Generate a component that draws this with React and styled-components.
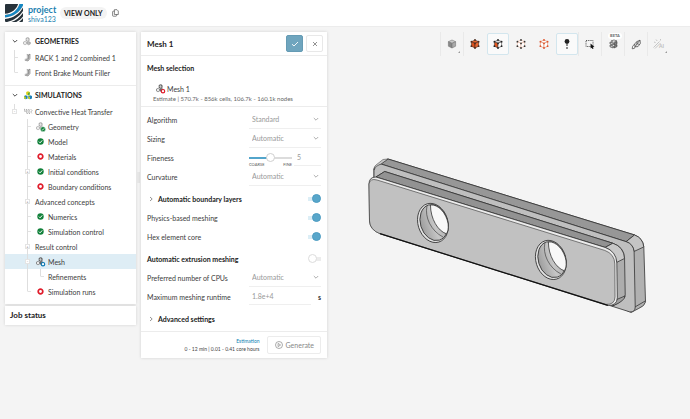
import styled, { createGlobalStyle, css } from 'styled-components';

const GlobalStyle = createGlobalStyle`
    *, *::before { box-sizing: border-box; }
    body {
        margin: 0;
        background: #f4f4f4;
        color: #3c3c3c;
        font-family: Lato, "Liberation Sans", sans-serif;
        font-size: 7px;
        line-height: 10px;
    }
    button, input, select { font: inherit; color: inherit; margin: 0; padding: 0; }
    h1, h2, h3, p, ul { margin: 0; padding: 0; font-size: inherit; }
    svg { display: block; }
`;

const Page = styled.div`
    display: flex;
    flex-direction: column;
    min-height: 100vh;
`;

const Header = styled.header`
    display: flex;
    align-items: center;
    height: 27px;
    padding: 0 5px;
    background: white;
    border-bottom: 1px solid #ececec;
`;

const Titles = styled.div`
    margin-left: 5px;
    padding-top: 2px;
    width: 32px;
`;

const ProjectLink = styled.a`
    display: block;
    color: #1d7fb0;
    text-decoration: none;
    font-size: ${(p) => (p.$main ? '9px' : '7px')};
    font-weight: ${(p) => (p.$main ? 700 : 400)};
    line-height: ${(p) => (p.$main ? '10px' : '8px')};
`;

const Pill = styled.span`
    padding: 1px 4px;
    margin-right: 5px;
    border-radius: 6px;
    background: #f3f3f3;
    color: #222;
    font-weight: 700;
    white-space: nowrap;
`;

const IconButton = styled.button`
    display: grid;
    place-items: center;
    border: 0;
    background: none;
`;

const Main = styled.main`
    display: flex;
    flex: 1;
    align-items: flex-start;
    padding: 5px 0 0 5px;
`;

const Sidebar = styled.aside`
    flex: none;
    width: 131px;
`;

const Card = styled.section`
    background: white;
    box-shadow: 0 0 3px rgba(0, 0, 0, 0.14);
`;

const TreeList = styled.ul`
    list-style: none;
    padding-bottom: 5px;
    & + & { border-top: 1px solid #ececec; }
`;

const TreeRow = styled.li`
    display: flex;
    align-items: center;
    height: ${(p) => (p.$root ? '18px' : '15px')};
    padding-left: 3px;
    white-space: nowrap;
    background: ${(p) => (p.$selected ? '#deedf5' : 'transparent')};
    ${(p) => p.$root && css`
        color: #222;
        font-weight: 700;
    `}
`;

const Cell = styled.span`
    display: grid;
    place-items: center;
    flex: none;
    width: 13px;
    height: 100%;
    background: ${(p) => (p.$line ? 'linear-gradient(#dedede, #dedede) 6px 0 / 1px ' + (p.$line === 'end' ? '50%' : '100%') + ' no-repeat' : 'none')};
`;

const Tick = styled.span`
    width: 3px;
    height: 1px;
    margin-left: 4px;
    background: #e2e2e2;
`;

const Expander = styled.button`
    display: grid;
    place-items: center;
    width: 5px;
    height: 5px;
    border: 1px solid #e4e4e4;
    background: white;
    color: #777;
    font-size: 4px;
    line-height: 3px;
`;

const RowText = styled.span`
    margin-left: 1px;
`;

const JobStatus = styled(Card)`
    margin-top: 2px;
    padding: 4px 5px;
    font-size: 8px;
    font-weight: 700;
    line-height: 11px;
    color: #222;
`;

const Handle = styled.span`
    flex: none;
    align-self: flex-start;
    width: 3px;
    height: 11px;
    margin: 140px 1px 0;
    background: #e6e6e6;
`;

const Panel = styled(Card).attrs({ as: 'form' })`
    flex: none;
    width: 186px;
`;

const PanelHeader = styled.div`
    display: flex;
    align-items: center;
    gap: 3px;
    height: 24px;
    padding: 0 4px 0 6px;
    border-bottom: 1px solid #ececec;
`;

const PanelTitle = styled.h1`
    flex: 1;
    font-size: 8px;
    color: #222;
`;

const SquareButton = styled(IconButton).attrs({ type: 'button' })`
    width: 17px;
    height: 17px;
    border: 1px solid ${(p) => (p.$primary ? '#659bb4' : '#e8e8e8')};
    border-radius: 2px;
    color: ${(p) => (p.$primary ? 'white' : '#777')};
    background: ${(p) => (p.$primary ? '#6fa5be' : 'white')};
`;

const Selection = styled.div`
    height: 51px;
    padding: 7px 6px 0;
    border-bottom: 1px solid #ececec;
`;

const SelectionTitle = styled.h2`
    color: #222;
`;

const MeshName = styled.div`
    display: flex;
    align-items: center;
    gap: 1px;
    margin-top: 10px;
    padding-left: 8px;
`;

const Estimate = styled.p`
    padding-left: 6px;
    font-size: 6px;
    color: #666;
    white-space: nowrap;
`;

const Fields = styled.div`
    display: grid;
    gap: 3px;
    padding: 3px 6px;
`;

const Field = styled.div`
    display: flex;
    align-items: center;
    height: 19px;
`;

const Label = styled.label`
    flex: 1;
    white-space: nowrap;
    ${(p) => p.$strong && css`
        color: #222;
        font-weight: 700;
    `}
`;

const Twisty = styled(IconButton).attrs({ type: 'button' })`
    width: 8px;
    margin-right: 3px;
    color: #777;
`;

const Control = styled.div`
    display: flex;
    align-items: center;
    flex: none;
    width: 72px;
    height: 19px;
    color: #999;
    ${(p) => p.$underlined && css`
        padding-right: 2px;
        border-bottom: 1px solid #efefef;
    `}
`;

const Select = styled.select`
    appearance: none;
    flex: 1;
    padding-left: 3px;
    border: 0;
    background: none;
    outline: none;
`;

const TextInput = styled.input`
    width: ${(p) => p.$width};
    height: 17px;
    border: 0;
    border-bottom: 1px solid #efefef;
    padding-left: 3px;
    background: none;
`;

const Unit = styled.span`
    flex: 1;
    text-align: right;
    color: #333;
    font-weight: 700;
`;

const SliderBox = styled.div`
    width: 43px;
    margin-right: 2px;
    padding-top: 5px;
`;

const Slider = styled.input`
    display: block;
    appearance: none;
    width: 43px;
    height: 9px;
    background: linear-gradient(to right, #53a5cb 50%, #dcdcdc 50%) 0 4px / 100% 2px no-repeat;
    &::-webkit-slider-thumb {
        appearance: none;
        box-sizing: border-box;
        width: 9px;
        height: 9px;
        border: 1px solid #d0d0d0;
        border-radius: 50%;
        background: white;
    }
`;

const SliderEnds = styled.div`
    display: flex;
    justify-content: space-between;
    font-size: 4px;
    line-height: 5px;
    color: #555;
`;

const Toggle = styled.input.attrs({ type: 'checkbox' })`
    appearance: none;
    display: flex;
    align-items: center;
    width: 13px;
    height: 9px;
    background: linear-gradient(#ececec, #ececec) 3px 3px / 10px 4px no-repeat;
    &::before {
        content: "";
        width: 9px;
        height: 9px;
        border: 1px solid #dcdcdc;
        border-radius: 50%;
        background: white;
    }
    &:checked {
        justify-content: flex-end;
        background: linear-gradient(#dceef6, #dceef6) 0 3px / 10px 4px no-repeat;
    }
    &:checked::before {
        border-color: #4c9cc2;
        background: #58a6ca;
    }
`;

const Footer = styled.div`
    display: flex;
    align-items: center;
    justify-content: flex-end;
    gap: 7px;
    height: 27px;
    padding: 0 6px;
    border-top: 1px solid #ececec;
`;

const Estimation = styled.div`
    font-size: 5px;
    line-height: 8px;
    text-align: right;
    color: #444;
    a {
        color: #0d7fb3;
        text-decoration: none;
    }
`;

const GenerateButton = styled.button.attrs({ type: 'button' })`
    display: flex;
    align-items: center;
    gap: 3px;
    height: 18px;
    padding: 0 6px 0 7px;
    border: 1px solid #ececec;
    border-radius: 2px;
    background: white;
    color: #888;
`;

const Viewport = styled.section`
    flex: 1;
    min-width: 0;
    padding-right: 20px;
`;

const Toolbar = styled.div`
    display: flex;
    justify-content: flex-end;
`;

const ToolCell = styled.div`
    position: relative;
    display: grid;
    place-items: center;
    width: 23px;
    height: 24px;
    border-left: 1px solid ${(p) => (p.$divider ? '#e9e9e9' : 'transparent')};
`;

const ToolButton = styled(IconButton)`
    width: 22px;
    height: 22px;
    border: 1px solid ${(p) => (p.$active ? '#d3e6ee' : 'transparent')};
    border-radius: 2px;
    background: ${(p) => (p.$active ? '#fafafa' : 'none')};
`;

const Beta = styled.span`
    position: absolute;
    top: 1px;
    left: 6px;
    padding: 0 2px;
    border-radius: 3px;
    background: white;
    font-size: 4px;
    font-weight: 700;
    line-height: 6px;
    color: #666;
`;

const MoreMark = styled.span`
    position: absolute;
    right: 3px;
    bottom: 3px;
    border: 1px solid transparent;
    border-right-color: #999;
    border-bottom-color: #999;
`;

const Model = styled.svg`
    width: 81%;
    margin: 102px 0 0 12%;
    overflow: visible;
`;

const Chevron = ({ right }) => (
    <svg width="6" height="6" viewBox="0 0 6 6" fill="none" stroke="currentColor" strokeWidth="0.8">
        <path d={right ? 'M2 1 L4.2 3 L2 5' : 'M0.8 2 L3 4.2 L5.2 2'} />
    </svg>
);

const Logo = () => (
    <svg width="18" height="18" viewBox="0 0 17 17">
        <rect width="17" height="17" rx="1" fill="#27323a" />
        <path d="M0 10.2 C7 9.5 11.5 6 13.6 0 H17 V1.6 C13.5 8 8 12 0 13Z" fill="#1687c2" />
        <path d="M0 9.3 C6.5 8.7 10.8 5 12.4 0 H13.6 C11.8 6 7 9.8 0 10.4Z M0 12.8 C8 12 13.5 8 17 1.4 V3.4 C13.5 9.6 8 13.4 0 14.2Z M2 17 C8 15.6 13.5 12 17 6.6 V8.4 C14 12.6 10 15.6 6 17Z M10.6 17 C13.5 15.6 15.5 13.8 17 11.8 V13.2 C15.8 14.8 14.4 16.2 13.2 17Z" fill="white" />
    </svg>
);

const CopyIcon = () => (
    <svg width="7" height="8" viewBox="0 0 7 8" fill="white" stroke="#555" strokeWidth="0.7">
        <rect x="0.6" y="2.2" width="4" height="5" rx="0.6" />
        <path d="M2.4 0.7 H5 L6.3 2 V5.5 H2.4Z" />
    </svg>
);

const Badge = ({ kind }) => {
    if (kind === 'ok') return (
        <g>
            <circle cx="8" cy="8.2" r="2.5" fill="#12813b" stroke="white" strokeWidth="0.4" />
            <path d="M6.8 8.3 L7.7 9.1 L9.2 7.3" stroke="white" strokeWidth="0.7" fill="none" />
        </g>
    );
    return <circle cx="8" cy="8.2" r="1.7" fill="white" stroke={kind === 'error' ? '#e01c2b' : '#0d7ab5'} strokeWidth="1.2" />;
};

const PartsIcon = ({ badge, dark }) => (
    <svg width="11" height="11" viewBox="0 0 11 11">
        <g fill={dark ? '#777' : '#bbb'} stroke={dark ? '#333' : '#888'} strokeWidth="0.5">
            <path d="M4 2.2 L6 1.6 L7.2 2.4 V4.6 L5.4 5.4 L4 4.6Z" />
            <path d="M1.5 6 L3.2 5.2 L4.6 6 V8 L3 8.8 L1.5 8Z" fill="#ddd" />
            <path d="M5.2 6.2 L6.6 5.6 L8.3 6.3 V8 L6.6 8.8 L5.2 8Z" />
        </g>
        <path d="M4 3.2 L7 4 M5.5 2 V5 M1.5 7 L4.5 7.3 M3 5.4 V8.6" stroke="white" strokeWidth="0.4" />
        {badge && <Badge kind={badge} />}
    </svg>
);

const PartIcon = () => (
    <svg width="9" height="9" viewBox="0 0 9 9">
        <path d="M3.8 1.5 L7 1 V5.5 L5 8 L1.8 7.3 V5.7 L3.8 5.5Z" fill="#c4c4c4" />
        <path d="M3.8 1.5 L5.5 2.2 V5.8 L3.2 6.4 M5.5 2.2 L7 1 V5.5 L5 8 L1.8 7.2" fill="none" stroke="#777" strokeWidth="0.6" />
    </svg>
);

const SimulationIcon = () => (
    <svg width="10" height="9" viewBox="0 0 10 9">
        <path d="M3.2 1 L5 0.3 L6.8 1 V3.5 L5 4.4 L3.2 3.5Z" fill="#d9cf19" />
        <path d="M1 5 L2.8 4.2 L4.6 5 V7.4 L2.8 8.3 L1 7.4Z" fill="#1c80b8" />
        <path d="M5.2 5 L7 4.2 L9 5 V7.4 L7 8.3 L5.2 7.4Z" fill="#1c80b8" />
        <path d="M5 2 V4.4 L6.8 3.5 V1.2Z" fill="#55a83a" />
        <path d="M2.8 6 V8.3 L1 7.4 V5Z M7 6 V8.3 L5.2 7.4 V5Z" fill="#c4cf23" />
    </svg>
);

const HeatIcon = () => (
    <svg width="10" height="9" viewBox="0 0 10 9" fill="none" stroke="#888" strokeWidth="0.8">
        <path d="M1 2 C2.8 2.4 0.8 4.2 2.6 5 M3.2 2 C5 3 2.8 4.8 4.4 7 M5.6 2 C7 3.4 5 5 6.6 7" />
        <path d="M7.5 2 L9 3.5 L7.8 5 L9 6.7" strokeDasharray="1 0.5" />
    </svg>
);

const StatusIcon = ({ ok }) => (
    <svg width="7" height="7" viewBox="0 0 7 7" fill="none">
        {ok ? <circle cx="3.5" cy="3.5" r="3.2" fill="#12813b" /> : <circle cx="3.5" cy="3.5" r="2.3" stroke="#e01c2b" strokeWidth="1.7" />}
        {ok && <path d="M1.9 3.6 L3.1 4.8 L5.2 2.4" stroke="white" strokeWidth="1" />}
    </svg>
);

const icons = {
    parts: <PartsIcon />,
    part: <PartIcon />,
    sim: <SimulationIcon />,
    heat: <HeatIcon />,
    geometry: <PartsIcon badge="ok" />,
    mesh: <PartsIcon dark badge="info" />,
    ok: <StatusIcon ok />,
    todo: <StatusIcon />,
};

// cells: ' ' blank, '|' guide, 'L' last guide, '+' and '-' expanders, 'e' expander closing its guide, 'i' plain guide
const geometries = [
    { cells: '|', icon: 'part', text: 'RACK 1 and 2 combined 1' },
    { cells: 'L', icon: 'part', text: 'Front Brake Mount Filler' },
];

const simulations = [
    { cells: 'e', icon: 'heat', text: 'Convective Heat Transfer' },
    { cells: ' |', icon: 'geometry', text: 'Geometry' },
    { cells: ' |', icon: 'ok', text: 'Model' },
    { cells: ' |', icon: 'todo', text: 'Materials' },
    { cells: ' +', icon: 'ok', text: 'Initial conditions' },
    { cells: ' |', icon: 'todo', text: 'Boundary conditions' },
    { cells: ' +', text: 'Advanced concepts' },
    { cells: ' |', icon: 'ok', text: 'Numerics' },
    { cells: ' |', icon: 'ok', text: 'Simulation control' },
    { cells: ' +', text: 'Result control' },
    { cells: ' -', icon: 'mesh', text: 'Mesh', selected: true },
    { cells: ' iL', text: 'Refinements' },
    { cells: ' L', icon: 'todo', text: 'Simulation runs' },
];

function Guide({ type }) {
    if (type === ' ') return <Cell />;
    if (type === 'i') return <Cell $line="full" />;
    if (type === '|' || type === 'L') return <Cell $line={type === 'L' ? 'end' : 'full'}><Tick /></Cell>;
    return (
        <Cell $line={type === 'e' ? 'end' : 'full'}>
            <Expander aria-label="Toggle">{type === '+' ? '+' : '-'}</Expander>
        </Cell>
    );
}

function Tree({ title, icon, rows }) {
    return (
        <TreeList>
            <TreeRow $root>
                <Cell><Chevron /></Cell>
                <Cell>{icons[icon]}</Cell>
                <RowText>{title}</RowText>
            </TreeRow>
            {rows.map((row) => (
                <TreeRow key={row.text} $selected={row.selected}>
                    {row.cells.split('').map((c, i) => <Guide key={i} type={c} />)}
                    {row.icon && <Cell>{icons[row.icon]}</Cell>}
                    <RowText>{row.text}</RowText>
                </TreeRow>
            ))}
        </TreeList>
    );
}

function SelectField({ id, label, value }) {
    return (
        <Field>
            <Label htmlFor={id}>{label}</Label>
            <Control $underlined>
                <Select id={id} defaultValue={value}><option>{value}</option></Select>
                <Chevron />
            </Control>
        </Field>
    );
}

function ToggleField({ id, label, strong, expandable, on }) {
    return (
        <Field>
            {expandable && <Twisty aria-label="Expand"><Chevron right /></Twisty>}
            <Label htmlFor={id} $strong={strong}>{label}</Label>
            <Toggle id={id} defaultChecked={on} />
        </Field>
    );
}

const Cube = ({ top, left, right, stroke, dots }) => (
    <svg width="10" height="10" viewBox="0 0 10 10">
        <g stroke={stroke} strokeWidth="0.6" strokeLinejoin="round">
            <path d="M5 1 L8.6 2.7 L5 4.4 L1.4 2.7Z" fill={top} />
            <path d="M1.4 2.7 L5 4.4 V9 L1.4 7.2Z" fill={left} />
            <path d="M8.6 2.7 L5 4.4 V9 L8.6 7.2Z" fill={right} />
        </g>
        {dots && (
            <g fill={dots}>
                {[[5, 1], [8.6, 2.7], [5, 4.4], [1.4, 2.7], [1.4, 7.2], [5, 9], [8.6, 7.2]].map(([x, y]) => (
                    <circle key={x + '-' + y} cx={x} cy={y} r="0.9" />
                ))}
            </g>
        )}
    </svg>
);

const PinIcon = () => (
    <svg width="8" height="12" viewBox="0 0 8 12">
        <circle cx="4" cy="3.4" r="2.4" fill="#222" />
        <path d="M4 5 V8 M4 9 V11" stroke="#222" strokeWidth="1" />
    </svg>
);

const BoxSelectIcon = () => (
    <svg width="10" height="10" viewBox="0 0 10 10" fill="none">
        <rect x="1" y="1.5" width="7" height="6" stroke="#444" strokeWidth="0.9" strokeDasharray="1.2 1" />
        <path d="M5.5 4.5 L9.5 8 L7.8 8.2 L8.5 9.8 L7.5 10 L6.8 8.7 L5.7 9.4Z" fill="#111" />
    </svg>
);

const SectionIcon = () => (
    <svg width="9" height="10" viewBox="0 0 9 10" fill="#ccc" stroke="#333" strokeWidth="0.6">
        <path d="M1 3 L4.2 4 V6 L1 5Z M1 6 L4.2 7 V9 L1 7.8Z" />
        <path d="M5 4 L8 2.6 V4.8 L5 6Z M5 7 L8 5.6 V7.6 L5 9Z" fill="#888" />
        <path d="M2 2 L5 1 L8 2 L4.6 3.2Z" fill="white" />
    </svg>
);

const MeasureIcon = () => (
    <svg width="11" height="11" viewBox="0 0 11 11" fill="none" stroke="#444" strokeWidth="0.7">
        <path d="M4 7.8 L3.6 5 L5.8 2.6 L9 1.2 L9.4 4.4 L7 7.6 Z" fill="#e8e8e8" />
        <path d="M3.6 5 L1.6 7.4 L1.2 9.8 L3.4 9.4 L4 7.8 M4 7.8 L6 4.8 L9 1.2 M5.8 2.6 L6 4.8 L8.6 5.4" />
    </svg>
);

const AiIcon = () => (
    <svg width="14" height="12" viewBox="0 0 14 12">
        <path d="M1.5 9.5 L7.5 3.5 M3 10.5 L8.5 5 M4 1.5 L5.2 3 M2 4 L3.6 4.6 M8.5 1 V2.5" stroke="#c0c0c0" strokeWidth="0.9" />
        <text x="7" y="10" fontSize="5" fontWeight="700" fill="#bbb">AI</text>
    </svg>
);

const tools = [
    { name: 'Shaded', divider: true, icon: <Cube top="#ccc" left="#888" right="#aaa" stroke="#777" />, more: true },
    { name: 'Select volumes', divider: true, icon: <Cube top="#e8642e" left="#d9501c" right="#e8642e" stroke="#4a2a1e" dots="#4a2a1e" /> },
    { name: 'Select faces', active: true, icon: <Cube top="#ddd" left="#e0561f" right="#fff" stroke="#444" dots="#222" /> },
    { name: 'Select nodes', icon: <Cube top="#fff" left="#fff" right="#fff" stroke="#e9b49c" dots="#333" /> },
    { name: 'Select edges', icon: <Cube top="#fff" left="#fff" right="#fff" stroke="#d98868" dots="#e2532a" /> },
    { name: 'Probe', active: true, icon: <PinIcon /> },
    { name: 'Box selection', divider: true, icon: <BoxSelectIcon /> },
    { name: 'Mesh clip', divider: true, icon: <SectionIcon />, beta: true },
    { name: 'Measure', divider: true, icon: <MeasureIcon /> },
    { name: 'Assistant', divider: true, icon: <AiIcon />, more: true },
];

const Hole = () => (
    <g fill="none" stroke="#333" strokeWidth="0.8">
        <ellipse cx="435" cy="223" rx="15" ry="20" transform="rotate(-17 435 223)" fill="#e2e2e2" />
        <ellipse cx="436" cy="222.6" rx="13.6" ry="18.4" transform="rotate(-17 436 222.6)" fill="url(#bore)" />
        <path d="M432.5 205 C440 204 448.5 213 450.2 224 C450.6 229 450 232 448.3 233.8 C440 231 432.5 219 432.5 205Z" fill="#f8f8f8" />
        <path d="M429 206 C426.5 217 433 231 445 237" strokeWidth="0.6" />
    </g>
);

// view box keeps the coordinates of the scene
const Bracket = () => (
    <Model viewBox="370 158 278 156" role="img" aria-label="Bracket geometry">
        <defs>
            <linearGradient id="bore" x1="0" x2="1">
                <stop offset="0" stopColor="#9d9d9d" />
                <stop offset="0.5" stopColor="#c6c6c6" />
                <stop offset="1" stopColor="#a8a8a8" />
            </linearGradient>
        </defs>
        <g stroke="#333" strokeWidth="0.8" strokeLinejoin="round">
            <path d="M383 164 L390 159 L636.7 235 Q645 238 646 247 L647.7 302 Q647 306 641 308.5 L633.3 312.5 L376 200 V170 Q376 165 383 164Z" fill="#b1b1b1" />
            <path d="M383 164 L390 159 L636.7 235 L628.3 241.7Z" fill="#979797" />
            <path d="M628.3 241.7 L636.7 235 Q645 238 646 247 L636.3 251.5 Q635 244 628.3 241.7Z" fill="#c4c4c4" />
            <path d="M383 164 L628.3 241.7 Q635.6 244 636.3 252 L637.4 307 Q637.3 312.5 632 312 L610 305 L376 190 V170 Q376 165 383 164Z" fill="#bfbfbf" />
            <path d="M376 170 Q377 166 383 164 L390 159 L385 159.5 L378 165 Q375.8 167 376 170Z" fill="#c8c8c8" strokeWidth="0.5" />
            <path d="M637.3 307 L647.6 301" fill="none" />
            <path d="M378 177 L386.7 171.5 L615 243.3 Q626 247 626.7 258 L627.4 295 Q627 300 615 306 L600 300Z" fill="#adadad" />
            <path d="M378 177 L386.7 171.5 L615 243.3 L607.3 247.5Z" fill="#929292" />
            <path d="M607.3 247.5 L615 243.3 Q626 247 626.7 258.5 L618.8 262.5 Q617 251 607.3 247.5Z" fill="#c8c8c8" />
            <path d="M618 300 L627.3 296 Q627 301 615 306Z" fill="#a0a0a0" />
            <path d="M371 184 Q371 177 378 177 L607.3 247.5 Q618.5 251.5 619 263 L619.5 298 Q619 306 610 305.5 L382 233.7 Q372 230 371.5 221Z" fill="#ececec" />
            <path d="M371 184 Q372 178 379 180 L607 250.5 Q616.7 254 617 264 L617.2 297 Q617 305 608 304.5 L382 233.7 Q372 230 371.5 221Z" fill="#c1c1c1" strokeWidth="0.6" />
            <path d="M382 233.7 L610 305.5" fill="none" stroke="#111" strokeWidth="1.2" />
        </g>
        <Hole />
        <g transform="translate(118 37)"><Hole /></g>
    </Model>
);

function MeshPanel() {
    return (
        <Panel>
            <PanelHeader>
                <PanelTitle>Mesh 1</PanelTitle>
                <SquareButton $primary aria-label="Apply">
                    <svg width="8" height="8" viewBox="0 0 8 8" fill="none" stroke="currentColor" strokeWidth="0.9"><path d="M1 4.2 L3 6 L7 2" /></svg>
                </SquareButton>
                <SquareButton aria-label="Close">
                    <svg width="6" height="6" viewBox="0 0 6 6" stroke="currentColor" strokeWidth="0.8"><path d="M1 1 L5 5 M5 1 L1 5" /></svg>
                </SquareButton>
            </PanelHeader>
            <Selection>
                <SelectionTitle>Mesh selection</SelectionTitle>
                <MeshName><PartsIcon dark badge="error" />Mesh 1</MeshName>
                <Estimate>Estimate | 570.7k - 856k cells, 106.7k - 160.1k nodes</Estimate>
            </Selection>
            <Fields>
                <div>
                    <SelectField id="algorithm" label="Algorithm" value="Standard" />
                    <SelectField id="sizing" label="Sizing" value="Automatic" />
                    <Field>
                        <Label htmlFor="fineness">Fineness</Label>
                        <Control>
                            <SliderBox>
                                <Slider id="fineness" type="range" min="0" max="10" defaultValue="5" />
                                <SliderEnds><span>COARSE</span><span>FINE</span></SliderEnds>
                            </SliderBox>
                            <TextInput $width="27px" aria-label="Fineness value" defaultValue="5" />
                        </Control>
                    </Field>
                    <SelectField id="curvature" label="Curvature" value="Automatic" />
                </div>
                <div>
                    <ToggleField id="layers" label="Automatic boundary layers" strong expandable on />
                    <ToggleField id="physics" label="Physics-based meshing" on />
                    <ToggleField id="hex" label="Hex element core" on />
                </div>
                <div>
                    <ToggleField id="extrusion" label="Automatic extrusion meshing" strong />
                    <SelectField id="cpus" label="Preferred number of CPUs" value="Automatic" />
                    <Field>
                        <Label htmlFor="runtime">Maximum meshing runtime</Label>
                        <Control>
                            <TextInput $width="62px" id="runtime" defaultValue="1.8e+4" />
                            <Unit>s</Unit>
                        </Control>
                    </Field>
                </div>
                <Field>
                    <Twisty aria-label="Expand"><Chevron right /></Twisty>
                    <Label as="h3" $strong>Advanced settings</Label>
                </Field>
            </Fields>
            <Footer>
                <Estimation>
                    <a href="#estimation">Estimation</a>
                    <p>0 - 12 min | 0.01 - 0.41 core hours</p>
                </Estimation>
                <GenerateButton>
                    <svg width="8" height="8" viewBox="0 0 8 8" fill="none" stroke="currentColor" strokeWidth="0.7">
                        <circle cx="4" cy="4" r="3.5" />
                        <path d="M3.1 2.4 L5.6 4 L3.1 5.6Z" />
                    </svg>
                    Generate
                </GenerateButton>
            </Footer>
        </Panel>
    );
}

function App() {
    return (
        <Page>
            <GlobalStyle />
            <Header>
                <Logo />
                <Titles>
                    <ProjectLink href="#project" $main>project</ProjectLink>
                    <ProjectLink href="#owner">shiva123</ProjectLink>
                </Titles>
                <Pill>VIEW ONLY</Pill>
                <IconButton aria-label="Copy"><CopyIcon /></IconButton>
            </Header>
            <Main>
                <Sidebar>
                    <Card>
                        <Tree title="GEOMETRIES" icon="parts" rows={geometries} />
                        <Tree title="SIMULATIONS" icon="sim" rows={simulations} />
                    </Card>
                    <JobStatus>Job status</JobStatus>
                </Sidebar>
                <Handle />
                <MeshPanel />
                <Viewport>
                    <Toolbar>
                        {tools.map((tool) => (
                            <ToolCell key={tool.name} $divider={tool.divider}>
                                <ToolButton $active={tool.active} aria-label={tool.name}>{tool.icon}</ToolButton>
                                {tool.beta && <Beta>BETA</Beta>}
                                {tool.more && <MoreMark />}
                            </ToolCell>
                        ))}
                    </Toolbar>
                    <Bracket />
                </Viewport>
            </Main>
        </Page>
    );
}

export default App;
